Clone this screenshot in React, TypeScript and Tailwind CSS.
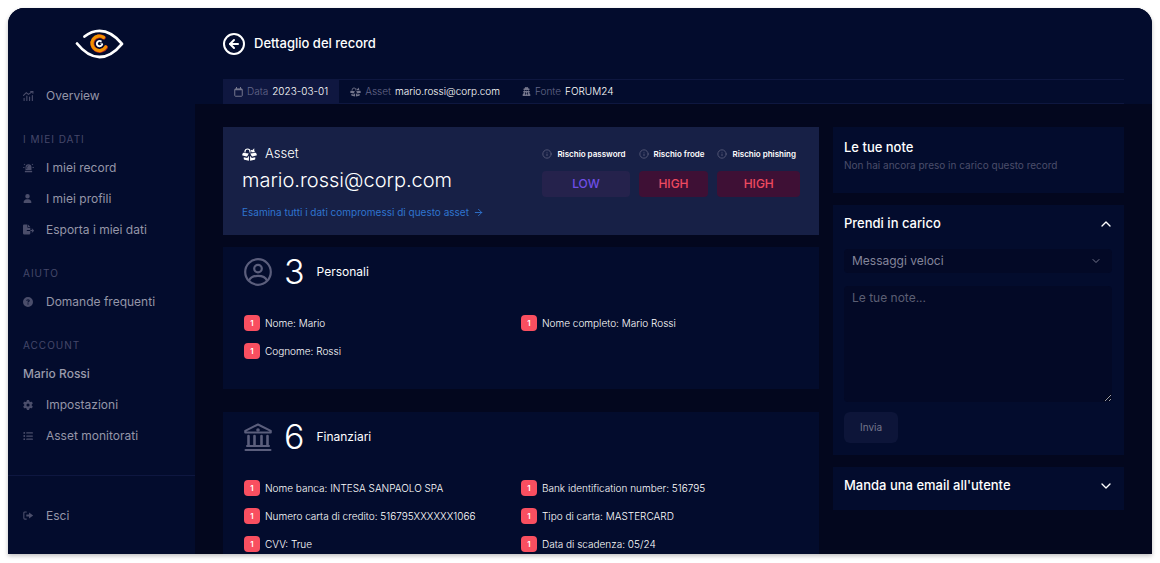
import { useState, type ReactNode } from 'react'
import { ArrowRight, ChevronDown, ChevronUp, CircleArrowLeft, Info } from 'lucide-react'
import { FaUser, FaFileExport, FaCircleQuestion, FaGear, FaListUl, FaUserSecret } from 'react-icons/fa6'

type Entry = { label: string; value: string }

const personal: Entry[] = [
  { label: 'Nome', value: 'Mario' },
  { label: 'Nome completo', value: 'Mario Rossi' },
  { label: 'Cognome', value: 'Rossi' },
]

const financial: Entry[] = [
  { label: 'Nome banca', value: 'INTESA SANPAOLO SPA' },
  { label: 'Bank identification number', value: '516795' },
  { label: 'Numero carta di credito', value: '516795XXXXXX1066' },
  { label: 'Tipo di carta', value: 'MASTERCARD' },
  { label: 'CVV', value: 'True' },
  { label: 'Data di scadenza', value: '05/24' },
]

function Logo() {
  return (
    <svg viewBox="0 0 49 30" className="h-[30px] w-[49px]" fill="none" strokeLinecap="round" strokeLinejoin="round">
      <path
        d="M9.5 7.5C14 3.8 19 1.8 24.5 1.8 33.5 1.8 41 7.5 47 14.8 41 22 33.5 28 24.5 28 15.5 28 8 22 2 14.5"
        stroke="#fff"
        strokeWidth="2.8"
      />
      <path d="M28.8 8.6A7.300 7.300 0 1 0 31 18.2" stroke="#b3261e" strokeWidth="4" />
      <path d="M28.6 8.4A7.300 7.300 0 1 0 30.6 18" stroke="#f39200" strokeWidth="3.200" />
      <path d="M25.8 12.2A2.700 2.700 0 1 0 27.200 15.200" stroke="#fff" strokeWidth="1.900" />
      <circle cx="26" cy="14.2" r="0.600" fill="#fff" />
    </svg>
  )
}

function ChartIcon() {
  return (
    <svg viewBox="0 0 20 18" className="h-[10px] w-[11px]" fill="none" stroke="currentColor" strokeWidth="2" strokeLinecap="round">
      <path d="M1 8l5-5 4 3 7-5M14 1h4v3" />
      <path d="M2 13v4M7 9v8M12 11v6M17 8v9" />
    </svg>
  )
}

function SirenIcon() {
  return (
    <svg viewBox="0 0 24 20" className="h-[10px] w-[12px]" fill="currentColor">
      <path d="M5.500 14.500V8.500a6.500 6.500 0 0 1 13 0v6zM9 12V8.500A3 3 0 0 1 12 5.500V4.300A4.200 4.200 0 0 0 7.800 8.500V12z" fillRule="evenodd" />
      <rect x="4" y="16" width="16" height="3.500" rx="1" />
      <path d="M0 8h3.500v1.600H0zM20.500 8H24v1.600h-3.500zM1.500 1.800l1-1.200 2.600 2-1 1.200zM22.500 1.800l-1-1.200-2.600 2 1 1.200z" />
    </svg>
  )
}

function ExitIcon() {
  return (
    <svg viewBox="0 0 20 16" className="h-[9px] w-[11px]">
      <path d="M6 1.500H3.500a2 2 0 0 0-2 2v9a2 2 0 0 0 2 2H6" fill="none" stroke="currentColor" strokeWidth="2" strokeLinecap="round" />
      <path d="M6 6h5V2.500L18.500 8 11 13.500V10H6z" fill="currentColor" />
    </svg>
  )
}

function BoxIcon({ className }: { className: string }) {
  return (
    <svg viewBox="0 0 30 26" className={className} fill="currentColor">
      <path d="M6 9V7a5 5 0 0 1 10 0v2" fill="none" stroke="currentColor" strokeWidth="2.400" />
      <path d="M17.500 3.500L20.500 4.500 24.500 0.500V5L26 8.500H19z" />
      <path d="M2 9.500L13.500 10.800 10.800 16c-.4.800-1 1-1.800.800L1.200 15c-.9-.2-1.200-.9-.8-1.700z" />
      <path d="M28 9.500L16.500 10.800 19.200 16c.4.800 1 1 1.800.800L28.800 15c.9-.2 1.200-.9.800-1.700z" />
      <path d="M3.500 18.500L10.500 20 13.800 15.500V25.500L5 23.500c-1-.3-1.500-1-1.500-2zM26.500 18.500L19.500 20 16.200 15.500V25.500L25 23.500c1-.3 1.500-1 1.500-2z" />
    </svg>
  )
}

function CalendarIcon() {
  return (
    <svg viewBox="0 0 18 20" className="h-[10px] w-[9px]" fill="none" stroke="currentColor" strokeWidth="2">
      <rect x="1.500" y="4" width="15" height="14.500" rx="1.500" />
      <path d="M1.500 5h15" strokeWidth="3" />
      <path d="M5 0v4M13 0v4" />
    </svg>
  )
}

function ProfileIcon() {
  return (
    <svg viewBox="0 0 28 28" className="size-7 text-[#5b5e7c]" fill="none" stroke="currentColor" strokeWidth="2.2">
      <circle cx="14" cy="14" r="12.800" />
      <circle cx="14" cy="10.600" r="3.800" />
      <path d="M5 22.500C6.500 19 10 17.800 14 17.800s7.500 1.200 9 4.700" />
    </svg>
  )
}

function BankIcon() {
  return (
    <svg viewBox="0 0 28 28" className="size-7 text-[#5b5e7c]" fill="none" stroke="currentColor" strokeWidth="2" strokeLinecap="round" strokeLinejoin="round">
      <path d="M1.200 9.500V7.800L14 1.500l12.800 6.300v1.700z" />
      <circle cx="14" cy="7" r="0.800" />
      <path d="M4.500 13v9.500M10.500 13v9.500M17.500 13v9.500M23.500 13v9.500" strokeWidth="2.600" />
      <path d="M3 23h22M1.500 27h25" />
    </svg>
  )
}

function NavItem({ icon, children }: { icon: ReactNode; children: ReactNode }) {
  return (
    <a href="#" className="flex h-[31px] items-center gap-3 text-xs text-[#9596a8]">
      <span className="flex w-[11px] shrink-0 text-[#4b4e6b]">{icon}</span>
      {children}
    </a>
  )
}

function NavHeading({ children }: { children: ReactNode }) {
  return <h2 className="mt-[15px] flex h-[26px] items-center text-[10px] tracking-widest text-[#45486a]">{children}</h2>
}

function Sidebar() {
  return (
    <aside className="w-[187px] shrink-0 bg-[#030c2d]">
      <div className="flex h-[72px] items-center justify-center pr-1">
        <Logo />
      </div>
      <nav className="pl-[15px]">
        <NavItem icon={<ChartIcon />}>Overview</NavItem>
        <NavHeading>I MIEI DATI</NavHeading>
        <NavItem icon={<SirenIcon />}>I miei record</NavItem>
        <NavItem icon={<FaUser size={9} />}>I miei profili</NavItem>
        <NavItem icon={<FaFileExport size={11} />}>Esporta i miei dati</NavItem>
        <NavHeading>AIUTO</NavHeading>
        <NavItem icon={<FaCircleQuestion size={10} />}>Domande frequenti</NavItem>
        <NavHeading>ACCOUNT</NavHeading>
        <p className="flex h-[31px] items-center text-xs font-medium text-[#9a9bab]">Mario Rossi</p>
        <NavItem icon={<FaGear size={10} />}>Impostazioni</NavItem>
        <NavItem icon={<FaListUl size={10} />}>Asset monitorati</NavItem>
      </nav>
      <div className="mt-6 border-t border-[#0e1740] pt-6 pl-[15px]">
        <NavItem icon={<ExitIcon />}>Esci</NavItem>
      </div>
    </aside>
  )
}

function Crumb({ icon, label, value, active = false }: { icon: ReactNode; label: string; value: string; active?: boolean }) {
  return (
    <div className={`flex items-center gap-1 px-[11px] text-[10px] ${active ? 'bg-[#0f1740]' : ''}`}>
      <span className="text-[#74768c]">{icon}</span>
      <span className="font-light text-[#65688a]">{label}</span>
      <span className="font-light text-white">{value}</span>
    </div>
  )
}

function Risk({ label, level }: { label: string; level: 'LOW' | 'HIGH' }) {
  return (
    <div>
      <p className="flex h-5 items-center gap-[5px] pr-1 text-[8px] font-semibold text-white">
        <Info size={10} className="text-[#5b5e7c]" />
        {label}
      </p>
      <p
        className={`mt-[7px] flex h-[26px] items-center justify-center rounded text-xs font-medium ${
          level === 'LOW' ? 'bg-[#25224c] text-[#6f4fe8]' : 'bg-[#3e1035] text-[#ee4a60]'
        }`}
      >
        {level}
      </p>
    </div>
  )
}

function AssetCard() {
  return (
    <section className="flex justify-between bg-[#172046] px-[19px] pt-[17px] pb-[15px]">
      <div>
        <p className="flex h-5 items-center gap-2 text-[13px] font-light text-white">
          <BoxIcon className="h-[13px] w-[15px]" />
          Asset
        </p>
        <h2 className="flex h-8 items-center text-xl font-light text-white">mario.rossi@corp.com</h2>
        <a href="#" className="mt-2 flex h-4 items-center gap-1 text-[10px] text-[#2f74cf]">
          Esamina tutti i dati compromessi di questo asset
          <ArrowRight size={11} />
        </a>
      </div>
      <div className="flex gap-[9px]">
        <Risk label="Rischio password" level="LOW" />
        <Risk label="Rischio frode" level="HIGH" />
        <Risk label="Rischio phishing" level="HIGH" />
      </div>
    </section>
  )
}

function StatCard({ icon, title, count, items }: { icon: ReactNode; title: string; count: number; items: Entry[] }) {
  return (
    <section className="bg-[#030c2d] px-[21px] pb-6">
      <h2 className="flex h-[50px] items-center gap-3 text-xs text-white">
        {icon}
        <span className="text-[34px] font-light">{count}</span>
        {title}
      </h2>
      <ul className="mt-3 grid grid-cols-2">
        {items.map((item) => (
          <li key={item.label} className="flex h-7 items-center gap-[5px] text-[10px] font-light text-white">
            <span className="flex size-4 shrink-0 items-center justify-center rounded bg-[#f94f60] text-[8px] font-semibold">1</span>
            {item.label}: {item.value}
          </li>
        ))}
      </ul>
    </section>
  )
}

function Accordion({ title, initial = false, children }: { title: string; initial?: boolean; children: ReactNode }) {
  const [open, setOpen] = useState(initial)
  const Chevron = open ? ChevronUp : ChevronDown

  return (
    <section className="bg-[#030c2d] pr-3 pb-[5px] pl-[11px]">
      <button
        type="button"
        aria-expanded={open}
        onClick={() => setOpen(!open)}
        className="flex h-[38px] w-full items-center justify-between text-[13px] font-medium text-white"
      >
        {title}
        <Chevron size={16} className="-mr-0.5" />
      </button>
      {open && children}
    </section>
  )
}

function NoteForm() {
  return (
    <form className="pt-1.5 pb-[7px]" onSubmit={(e) => e.preventDefault()}>
      <div className="relative">
        <select
          aria-label="Messaggi veloci"
          className="block h-6 w-full appearance-none rounded bg-[#030926] px-2 text-xs text-[#83859a]"
        >
          <option>Messaggi veloci</option>
        </select>
        <ChevronDown size={12} className="pointer-events-none absolute top-1.5 right-2.5 text-[#74768c]" />
      </div>
      <textarea
        aria-label="Le tue note"
        placeholder="Le tue note..."
        className="mt-[13px] block h-[116px] w-full resize-y rounded bg-[#030926] px-2 py-1 text-xs text-white [color-scheme:dark] placeholder:text-[#5b5e73]"
      />
      <button type="submit" className="mt-2.5 h-[31px] rounded-md bg-[#0d1539] px-4 text-[10px] text-[#74768c]">
        Invia
      </button>
    </form>
  )
}

export default function App() {
  return (
    <div className="h-screen bg-white px-2 pt-2 pb-[9px] font-['Inter',sans-serif]">
      <div className="flex h-full overflow-hidden rounded-t-2xl bg-[#03071e] shadow-[0_2px_4px_rgba(0,0,0,0.25)]">
        <Sidebar />
        <main className="min-w-0 flex-1">
          <header className="bg-[#030c2d] px-7">
            <div className="flex h-[71px] items-center gap-2 text-white">
              <a href="#" aria-label="Indietro">
                <CircleArrowLeft size={24} className="-ml-px" />
              </a>
              <h1 className="text-[13px] font-medium">Dettaglio del record</h1>
            </div>
            <div className="flex h-[25px] border-y border-[#0e1740]">
              <Crumb icon={<CalendarIcon />} label="Data" value="2023-03-01" active />
              <Crumb icon={<BoxIcon className="h-[10px] w-[11px]" />} label="Asset" value="mario.rossi@corp.com" />
              <Crumb icon={<FaUserSecret size={9} />} label="Fonte" value="FORUM24" />
            </div>
          </header>

          <div className="flex items-start gap-3.5 px-7 pt-[23px]">
            <div className="min-w-0 flex-1">
              <AssetCard />
              <div className="mt-3 flex flex-col gap-[23px]">
                <StatCard icon={<ProfileIcon />} title="Personali" count={3} items={personal} />
                <StatCard icon={<BankIcon />} title="Finanziari" count={6} items={financial} />
              </div>
            </div>

            <div className="flex w-[291px] shrink-0 flex-col gap-3">
              <section className="bg-[#030c2d] px-[11px] pt-2.5 pb-5">
                <h2 className="text-[13px] leading-5 font-medium text-white">Le tue note</h2>
                <p className="text-[10px] leading-4 text-[#4b4e6b]">Non hai ancora preso in carico questo record</p>
              </section>
              <Accordion title="Prendi in carico" initial>
                <NoteForm />
              </Accordion>
              <Accordion title="Manda una email all'utente">
                <NoteForm />
              </Accordion>
            </div>
          </div>
        </main>
      </div>
    </div>
  )
}
